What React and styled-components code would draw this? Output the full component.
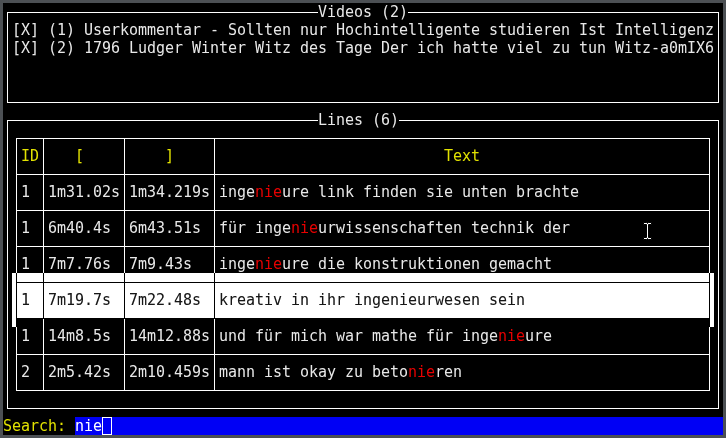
import React from "react";
import styled, { createGlobalStyle } from "styled-components";

const GlobalStyle = createGlobalStyle`
  html, body {
    margin: 0;
    padding: 0;
    background: #4c5054;
  }
  body {
    font-family: "DejaVu Sans Mono", "Liberation Mono", monospace;
  }
`;

const Screen = styled.div`
  position: relative;
  box-sizing: border-box;
  width: 726px;
  height: 438px;
  padding: 3px;
  background: #4c5054;
`;

const Terminal = styled.div`
  width: 720px;
  height: 432px;
  background: #000;
  color: #e8e8e8;
  font-family: "DejaVu Sans Mono", "Liberation Mono", monospace;
  font-size: 15px;
  letter-spacing: -0.03px;
  line-height: 18px;
  display: flex;
  flex-direction: column;
  overflow: hidden;
`;

const Panel = styled.section`
  position: relative;
  box-sizing: border-box;
  height: ${(p) => p.$height}px;
  margin: 9px 4px 8px;
  border: 1px solid #fff;
  flex: none;
`;

const PanelTitle = styled.div`
  position: absolute;
  top: -10px;
  left: 310px;
  height: 18px;
  background: #000;
  white-space: pre;
`;

const VideoList = styled.div`
  padding: 8px 0 0 4px;
  display: flex;
  flex-direction: column;
`;

const VideoItem = styled.div`
  height: 18px;
  white-space: pre;
`;

const LinesBody = styled.div`
  padding: 17px 8px 0;
`;

const Table = styled.div`
  display: flex;
  flex-direction: column;
  gap: 1px;
  padding: 1px;
  background: #fff;
`;

const Row = styled.div`
  position: relative;
  display: grid;
  grid-template-columns: 26px 80px 89px 1fr;
  gap: 1px;
  height: 35px;
  background: #fff;

  ${(p) =>
    p.$selected &&
    `
    &::after {
      content: "";
      position: absolute;
      left: -5px;
      right: -5px;
      top: -10px;
      bottom: -9px;
      background: #fff;
      mix-blend-mode: difference;
      pointer-events: none;
    }
  `}
`;

const Cell = styled.div`
  background: #000;
  box-sizing: border-box;
  padding: 8px 0 0 ${(p) => p.$indent ?? 4}px;
  white-space: pre;
  overflow: hidden;
  color: ${(p) => (p.$head ? "#e2e200" : "inherit")};
`;

const Match = styled.span`
  color: #e60000;
`;

const SearchBar = styled.div`
  display: flex;
  height: 18px;
  flex: none;
`;

const SearchLabel = styled.div`
  width: 72px;
  color: #e2e200;
  white-space: pre;
`;

const SearchInput = styled.div`
  flex: 1;
  display: flex;
  background: #0000f5;
  color: #fff;
  white-space: pre;
`;

const Caret = styled.span`
  display: inline-block;
  box-sizing: border-box;
  width: 10px;
  height: 18px;
  border: 1px solid #fff;
`;

const Pointer = styled.svg`
  position: absolute;
  left: 643px;
  top: 222px;
`;

const videos = [
  "[X] (1) Userkommentar - Sollten nur Hochintelligente studieren Ist Intelligenz",
  "[X] (2) 1796 Ludger Winter Witz des Tage Der ich hatte viel zu tun Witz-a0mIX6",
];

const lines = [
  { id: "1", start: "1m31.02s", end: "1m34.219s", text: "ingenieure link finden sie unten brachte" },
  { id: "1", start: "6m40.4s", end: "6m43.51s", text: "für ingenieurwissenschaften technik der" },
  { id: "1", start: "7m7.76s", end: "7m9.43s", text: "ingenieure die konstruktionen gemacht" },
  { id: "1", start: "7m19.7s", end: "7m22.48s", text: "kreativ in ihr ingenieurwesen sein", selected: true },
  { id: "1", start: "14m8.5s", end: "14m12.88s", text: "und für mich war mathe für ingenieure" },
  { id: "2", start: "2m5.42s", end: "2m10.459s", text: "mann ist okay zu betonieren" },
];

const query = "nie";

function Highlighted({ text, plain }) {
  if (plain) return text;
  const parts = text.split(query);
  return parts.map((part, i) => (
    <React.Fragment key={i}>
      {part}
      {i < parts.length - 1 && <Match>{query}</Match>}
    </React.Fragment>
  ));
}

export default function App() {
  return (
    <>
      <GlobalStyle />
      <Screen>
        <Terminal>
          <Panel $height={91}>
            <PanelTitle>Videos (2)</PanelTitle>
            <VideoList>
              {videos.map((v) => (
                <VideoItem key={v}>{v}</VideoItem>
              ))}
            </VideoList>
          </Panel>
          <Panel $height={289}>
            <PanelTitle>Lines (6)</PanelTitle>
            <LinesBody>
              <Table>
                <Row>
                  <Cell $head $indent={4}>ID</Cell>
                  <Cell $head $indent={31}>[</Cell>
                  <Cell $head $indent={40}>]</Cell>
                  <Cell $head $indent={229}>Text</Cell>
                </Row>
                {lines.map((l, i) => (
                  <Row key={i} $selected={l.selected}>
                    <Cell>{l.id}</Cell>
                    <Cell>{l.start}</Cell>
                    <Cell>{l.end}</Cell>
                    <Cell>
                      <Highlighted text={l.text} plain={l.selected} />
                    </Cell>
                  </Row>
                ))}
              </Table>
            </LinesBody>
          </Panel>
          <SearchBar>
            <SearchLabel>Search: </SearchLabel>
            <SearchInput>
              nie
              <Caret />
            </SearchInput>
          </SearchBar>
        </Terminal>
        <Pointer width="9" height="18" viewBox="0 0 9 18">
          <path
            d="M0.5 0.5 H3.5 L4.5 1.5 L5.5 0.5 H8.5 V2.5 H5.5 V15.5 H8.5 V17.5 H5.5 L4.5 16.5 L3.5 17.5 H0.5 V15.5 H3.5 V2.5 H0.5 Z"
            fill="#fff"
            stroke="#000"
            strokeWidth="1"
          />
        </Pointer>
      </Screen>
    </>
  );
}
